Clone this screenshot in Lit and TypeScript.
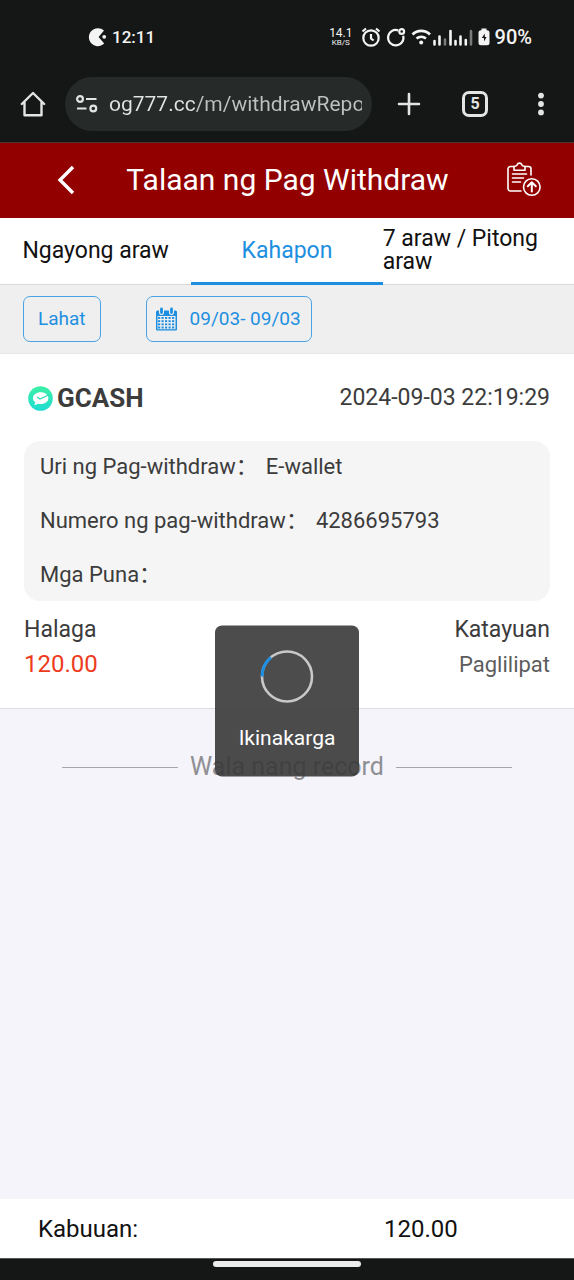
import { LitElement, html, css, svg } from "lit";
import { customElement, property, state } from "lit/decorators.js";
import { classMap } from "lit/directives/class-map.js";

const sharedFont = css`
  :host {
    font-family: Roboto, "Noto Sans CJK SC", sans-serif;
  }
  * {
    box-sizing: border-box;
  }
  button,
  input {
    font: inherit;
    color: inherit;
    background: none;
    border: 0;
    padding: 0;
    margin: 0;
    cursor: pointer;
  }
  svg {
    display: block;
    flex: none;
  }
`;

@customElement("status-bar")
class StatusBar extends LitElement {
  static styles = [
    sharedFont,
    css`
      :host {
        display: flex;
        align-items: center;
        justify-content: space-between;
        height: 74px;
        padding: 0 42px 0 88px;
        color: #f4f4f4;
        font-size: 20px;
        font-weight: 500;
      }
      .group {
        display: flex;
        align-items: center;
      }
      .left {
        gap: 4px;
        font-size: 17px;
      }
      .right {
        gap: 5px;
      }
      .speed {
        display: flex;
        flex-direction: column;
        align-items: center;
        margin-right: 3px;
        font-size: 12px;
        line-height: 12px;
        font-weight: 400;
      }
      .unit {
        font-size: 8px;
        line-height: 8px;
      }
    `,
  ];

  render() {
    return html`
      <div class="group left">
        <svg width="20" height="20" viewBox="0 0 20 20" fill="currentColor">
          <path d="M10 1.2a9 9 0 1 0 6.2 15.4L10.6 10l5.4-6.600A9 9 0 0 0 10 1.200z" />
          <circle cx="16.200" cy="9.800" r="1.900" />
        </svg>
        <span>12:11</span>
      </div>
      <div class="group right">
        <span class="speed"><span>14.1</span><span class="unit">KB/S</span></span>
        <svg width="20" height="20" viewBox="0 0 20 20" fill="none" stroke="currentColor" stroke-width="2.200">
          <circle cx="10" cy="11" r="7.700" />
          <path d="M1.500 4.500 5 1.500M18.500 4.500 15 1.500M10 7v4.500l2.600 2" />
        </svg>
        <svg width="20" height="20" viewBox="0 0 20 20" fill="none" stroke="currentColor" stroke-width="2.200">
          <path d="M12.200 3.400a7.700 7.700 0 1 0 5 5.300" />
          <circle cx="15.700" cy="4.500" r="2.400" />
        </svg>
        <svg width="62" height="20" viewBox="0 0 62 20" fill="none" stroke="currentColor">
          <path d="M1.500 7.500a12.500 12.500 0 0 1 17.500 0" stroke-width="2.800" />
          <path d="M5.500 11.500a7.500 7.500 0 0 1 9.500 0" stroke-width="2.600" />
          <circle cx="10.200" cy="15.500" r="2" fill="currentColor" stroke="none" />
          <path d="M23.500 17.500v-3.500M28.500 17.500V9.500M39.500 17.500V4M44.500 17.500v-3.500M49.500 17.500V9.500M54.800 17.500v-4.500" stroke-width="2.600" stroke-linecap="round" />
          <path d="M34 17.500v-5M60 17.500V4" stroke-width="2.600" stroke-linecap="round" opacity="0.450" />
        </svg>
        <svg width="12" height="20" viewBox="0 0 12 20" fill="currentColor">
          <path d="M3.500 1.500h5v1.800h.5a2.500 2.500 0 0 1 2.500 2.500v10a2.500 2.500 0 0 1-2.500 2.500H3A2.500 2.500 0 0 1 .5 15.800v-10A2.500 2.500 0 0 1 3 3.300h.5z" />
          <path d="M6.800 6.500 3.800 11h2.200V14.500l2.600-4.500H6.800z" fill="#141716" />
        </svg>
        <span>90%</span>
      </div>
    `;
  }
}

@customElement("browser-bar")
class BrowserBar extends LitElement {
  @property() url = "";

  static styles = [
    sharedFont,
    css`
      :host {
        display: flex;
        align-items: center;
        height: 69px;
        padding: 0 20px 8px 20px;
        color: #e3e5e4;
        border-bottom: 1px solid #4a3333;
      }
      .omnibox {
        flex: 1;
        min-width: 0;
        display: flex;
        align-items: center;
        gap: 10px;
        height: 54px;
        margin: 0 24px 0 19px;
        padding: 0 10px;
        border-radius: 27px;
        background: #262a29;
      }
      .url {
        flex: 1;
        min-width: 0;
        font-size: 21px;
        line-height: 32px;
        color: transparent;
        background: linear-gradient(90deg, #e3e5e4 86px, #bfc2c1 86px);
        background-clip: text;
        -webkit-background-clip: text;
      }
      .actions {
        display: flex;
        align-items: center;
        gap: 40px;
      }
      .count {
        display: grid;
        place-items: center;
        width: 26px;
        height: 26px;
        border: 3px solid currentColor;
        border-radius: 7px;
        font-size: 16px;
        line-height: 16px;
        font-weight: 700;
      }
    `,
  ];

  render() {
    return html`
      <button aria-label="Home">
        <svg width="26" height="26" viewBox="0 0 26 26" fill="none" stroke="currentColor" stroke-width="2.400" stroke-linejoin="round" stroke-linecap="round">
          <path d="M1.800 13 13 2l11.200 11M4.500 11v13.300h17V11" />
        </svg>
      </button>
      <div class="omnibox">
        <svg width="24" height="20" viewBox="0 0 24 20" fill="none" stroke="currentColor" stroke-width="2.200">
          <circle cx="5" cy="5" r="2.900" />
          <path d="M11 5h10.500M2 14.500h9.500" />
          <circle cx="18.300" cy="14.500" r="2.900" />
        </svg>
        <input class="url" type="text" aria-label="Address" .value=${this.url} />
      </div>
      <div class="actions">
        <button aria-label="New tab">
          <svg width="26" height="26" viewBox="0 0 26 26" stroke="currentColor" stroke-width="2.600" stroke-linecap="round">
            <path d="M13 3v20M3 13h20" />
          </svg>
        </button>
        <button class="count" aria-label="Open tabs">5</button>
        <button aria-label="Menu">
          <svg width="26" height="26" viewBox="0 0 26 26" fill="currentColor">
            <circle cx="13" cy="4.600" r="2.900" />
            <circle cx="13" cy="13" r="2.900" />
            <circle cx="13" cy="21.400" r="2.900" />
          </svg>
        </button>
      </div>
    `;
  }
}

interface WithdrawRecord {
  wallet: string;
  time: string;
  details: { label: string; value: string }[];
  amount: string;
  status: string;
}

@customElement("withdraw-record")
class WithdrawRecordCard extends LitElement {
  @property({ attribute: false }) record!: WithdrawRecord;

  static styles = [
    sharedFont,
    css`
      :host {
        display: block;
        padding: 24px 24px 26px;
        background: #fff;
        color: #3c3c3c;
        font-size: 23px;
        line-height: 40px;
        border-bottom: 1px solid #dcdce0;
      }
      .head {
        display: flex;
        align-items: center;
        justify-content: space-between;
      }
      .wallet {
        display: flex;
        align-items: center;
        gap: 4px;
        padding-left: 4px;
        font-size: 26px;
        font-weight: 700;
      }
      .details {
        display: grid;
        gap: 14px;
        margin: 23px 0 11px;
        padding: 6px 16px;
        border-radius: 16px;
        background: #f5f5f5;
        font-size: 22px;
      }
      .row {
        display: flex;
        gap: 8px;
      }
      dt,
      dd,
      dl {
        margin: 0;
      }
      .foot {
        display: flex;
        justify-content: space-between;
        line-height: 35px;
      }
      .amount {
        color: #ee3b20;
        font-size: 24px;
      }
      .end {
        text-align: right;
      }
      .status {
        color: #5c5c5c;
        font-size: 22px;
      }
    `,
  ];

  render() {
    const r = this.record;
    return html`
      <div class="head">
        <div class="wallet">
          <svg width="25" height="25" viewBox="0 0 25 25">
            <defs>
              <linearGradient id="mint" x1="0" y1="0" x2="0" y2="1">
                <stop offset="0" stop-color="#3cf0a5" />
                <stop offset="1" stop-color="#1fdcd2" />
              </linearGradient>
            </defs>
            <circle cx="12.500" cy="12.500" r="12.300" fill="url(#mint)" />
            <path d="M12.800 6.200c4.300 0 7.600 2.400 7.600 5.900 0 3.600-3.300 6-7.600 6-1 0-2-.1-2.900-.4-.9.600-2.300 1.300-3.900 1.200.9-.8 1.200-1.700 1.200-2.600C5.700 15.300 5 13.700 5 12.100c0-3.500 3.300-5.900 7.800-5.900z" fill="#fff" />
            <path d="m9.500 11.200 2.500 1.800 8.500-4" fill="none" stroke="#27dcb8" stroke-width="1.300" stroke-linecap="round" stroke-linejoin="round" />
          </svg>
          <span>${r.wallet}</span>
        </div>
        <time class="time">${r.time}</time>
      </div>
      <dl class="details">
        ${r.details.map(
          (d) => html`<div class="row"><dt>${d.label}：</dt><dd>${d.value}</dd></div>`
        )}
      </dl>
      <div class="foot">
        <div>
          <div>Halaga</div>
          <div class="amount">${r.amount}</div>
        </div>
        <div class="end">
          <div>Katayuan</div>
          <div class="status">${r.status}</div>
        </div>
      </div>
    `;
  }
}

@customElement("loading-toast")
class LoadingToast extends LitElement {
  @property() label = "";

  static styles = [
    sharedFont,
    css`
      :host {
        display: flex;
        flex-direction: column;
        align-items: center;
        gap: 19px;
        width: 144px;
        padding: 24px 0;
        border-radius: 7px;
        background: rgba(56, 56, 56, 0.9);
        color: #fff;
        font-size: 21px;
        line-height: 30px;
      }
    `,
  ];

  render() {
    return html`
      <svg width="54" height="54" viewBox="0 0 54 54" fill="none" stroke-width="2.600">
        <circle cx="27" cy="27" r="25" stroke="#c8c8c8" />
        <path d="M2 27A25 25 0 0 1 11 7.800" stroke="#1e8fe0" stroke-width="3" />
      </svg>
      <span role="status">${this.label}</span>
    `;
  }
}

@customElement("app-root")
class AppRoot extends LitElement {
  @state() private activeTab = 1;

  private tabs = ["Ngayong araw", "Kahapon", "7 araw / Pitong araw"];

  private record: WithdrawRecord = {
    wallet: "GCASH",
    time: "2024-09-03 22:19:29",
    details: [
      { label: "Uri ng Pag-withdraw", value: "E-wallet" },
      { label: "Numero ng pag-withdraw", value: "4286695793" },
      { label: "Mga Puna", value: "" },
    ],
    amount: "120.00",
    status: "Paglilipat",
  };

  static styles = [
    sharedFont,
    css`
      :host {
        display: flex;
        flex-direction: column;
        min-height: 100vh;
        background: #141716;
      }
      .page {
        position: relative;
        flex: 1;
        display: flex;
        flex-direction: column;
        background: #f4f4fa;
      }
      .header {
        display: grid;
        grid-template-columns: 72px 1fr 72px;
        align-items: center;
        height: 75px;
        padding: 0 14px 2px 30px;
        background: #930000;
        color: #fff;
      }
      .header button {
        display: grid;
        place-items: center;
      }
      .title {
        margin: 0;
        padding-right: 15px;
        font-size: 30px;
        line-height: 40px;
        font-weight: 400;
        text-align: center;
        white-space: nowrap;
      }
      .tabs {
        display: grid;
        grid-template-columns: repeat(3, 1fr);
        height: 67px;
        background: #fff;
        border-bottom: 1px solid #dadada;
      }
      .tab {
        display: grid;
        align-items: center;
        margin-bottom: -1px;
        border-bottom: 3px solid transparent;
        color: #111;
        font-size: 23px;
        line-height: 23px;
        text-align: center;
      }
      .tab.wraps {
        text-align: left;
      }
      .tab.active {
        color: #1e8fe0;
        border-bottom-color: #1e8fe0;
      }
      .filters {
        display: flex;
        align-items: center;
        gap: 45px;
        height: 69px;
        padding: 0 23px 1px;
        background: #efefef;
        border-bottom: 1px solid #e6e6e6;
      }
      .filter {
        display: flex;
        align-items: center;
        gap: 12px;
        height: 46px;
        padding: 0 10px 0 8px;
        border: 1px solid #4aa3e4;
        border-radius: 7px;
        color: #1e8fe0;
        font-size: 19px;
        line-height: 24px;
      }
      .filter.plain {
        padding: 0 14px;
      }
      .end {
        display: flex;
        align-items: center;
        gap: 12px;
        padding: 42px 62px;
        color: #8f8f93;
        font-size: 25px;
        line-height: 32px;
      }
      .end::before,
      .end::after {
        content: "";
        flex: 1;
        height: 1px;
        background: #a6a6aa;
      }
      .total {
        display: grid;
        grid-template-columns: 346px 1fr;
        align-items: center;
        height: 59px;
        margin-top: auto;
        padding: 0 38px;
        background: #fff;
        color: #111;
        font-size: 24px;
      }
      .toast {
        position: absolute;
        top: 50%;
        left: 50%;
        transform: translate(-50%, -50%);
      }
      .gesture {
        height: 22px;
        padding-top: 2px;
        border-top: 1px solid #555;
      }
      .pill {
        width: 148px;
        height: 6px;
        margin: 0 auto;
        border-radius: 3px;
        background: #ececec;
      }
    `,
  ];

  private calendarIcon() {
    const cells = [];
    for (let row = 0; row < 4; row++) {
      for (let col = 0; col < 5; col++) {
        cells.push(svg`<rect x=${3 + col * 3.5} y=${10 + row * 3.2} width="2.2" height="1.9" />`);
      }
    }
    return html`
      <svg width="23" height="24" viewBox="0 0 23 24">
        <path d="M2.500 3.500h18a1.500 1.500 0 0 1 1.500 1.500v17.500a1 1 0 0 1-1 1H2a1 1 0 0 1-1-1V5a1.500 1.500 0 0 1 1.500-1.500z" fill="#1e8fe0" />
        <path d="M2.500 9h18v13.200h-18z" fill="#efefef" />
        <g fill="#1e8fe0">${cells}</g>
        <path d="M6.500 2.500v3M16.500 2.500v3" stroke="#efefef" stroke-width="5" stroke-linecap="round" />
        <path d="M6.500 2v3.500M16.500 2v3.500" stroke="#1e8fe0" stroke-width="2.800" stroke-linecap="round" />
      </svg>
    `;
  }

  render() {
    return html`
      <status-bar></status-bar>
      <browser-bar url="og777.cc/m/withdrawReport"></browser-bar>
      <main class="page">
        <header class="header">
          <button aria-label="Back">
            <svg width="20" height="30" viewBox="0 0 20 30" fill="none" stroke="currentColor" stroke-width="3.400">
              <path d="M17 2 4 15l13 13" />
            </svg>
          </button>
          <h1 class="title">Talaan ng Pag Withdraw</h1>
          <button aria-label="Withdraw">
            <svg width="34" height="36" viewBox="0 0 34 36" fill="none" stroke="currentColor" stroke-width="1.600" stroke-linecap="round" stroke-linejoin="round">
              <path d="M7 4.500H3.500A2.500 2.500 0 0 0 1 7v19.500A2.500 2.500 0 0 0 3.500 29H14M18 4.500h3.500A2.500 2.500 0 0 1 24 7v6" />
              <path d="M7 8.200V5.500c0-1 .7-1.500 1.700-1.500.9 0 1.300-.5 1.500-1.200a2.400 2.400 0 0 1 4.600 0c.2.700.6 1.200 1.500 1.200 1 0 1.700.5 1.700 1.500v2.700z" />
              <path d="M5.500 12h14M5.500 16h11M5.500 20h8" />
              <circle cx="24.800" cy="25" r="8.300" />
              <path d="M24.800 29.500v-9M20.800 24.300l4-4 4 4" stroke-width="2" />
            </svg>
          </button>
        </header>
        <nav class="tabs">
          ${this.tabs.map(
            (label, i) => html`<button
              class=${classMap({ tab: true, active: i === this.activeTab, wraps: i === 2 })}
              @click=${() => (this.activeTab = i)}
            >
              ${label}
            </button>`
          )}
        </nav>
        <div class="filters">
          <button class="filter plain">Lahat</button>
          <button class="filter">${this.calendarIcon()}<span>09/03- 09/03</span></button>
        </div>
        <withdraw-record .record=${this.record}></withdraw-record>
        <div class="end">Wala nang record</div>
        <footer class="total">
          <span>Kabuuan:</span>
          <span>120.00</span>
        </footer>
        <loading-toast class="toast" label="Ikinakarga"></loading-toast>
      </main>
      <div class="gesture"><div class="pill"></div></div>
    `;
  }
}
